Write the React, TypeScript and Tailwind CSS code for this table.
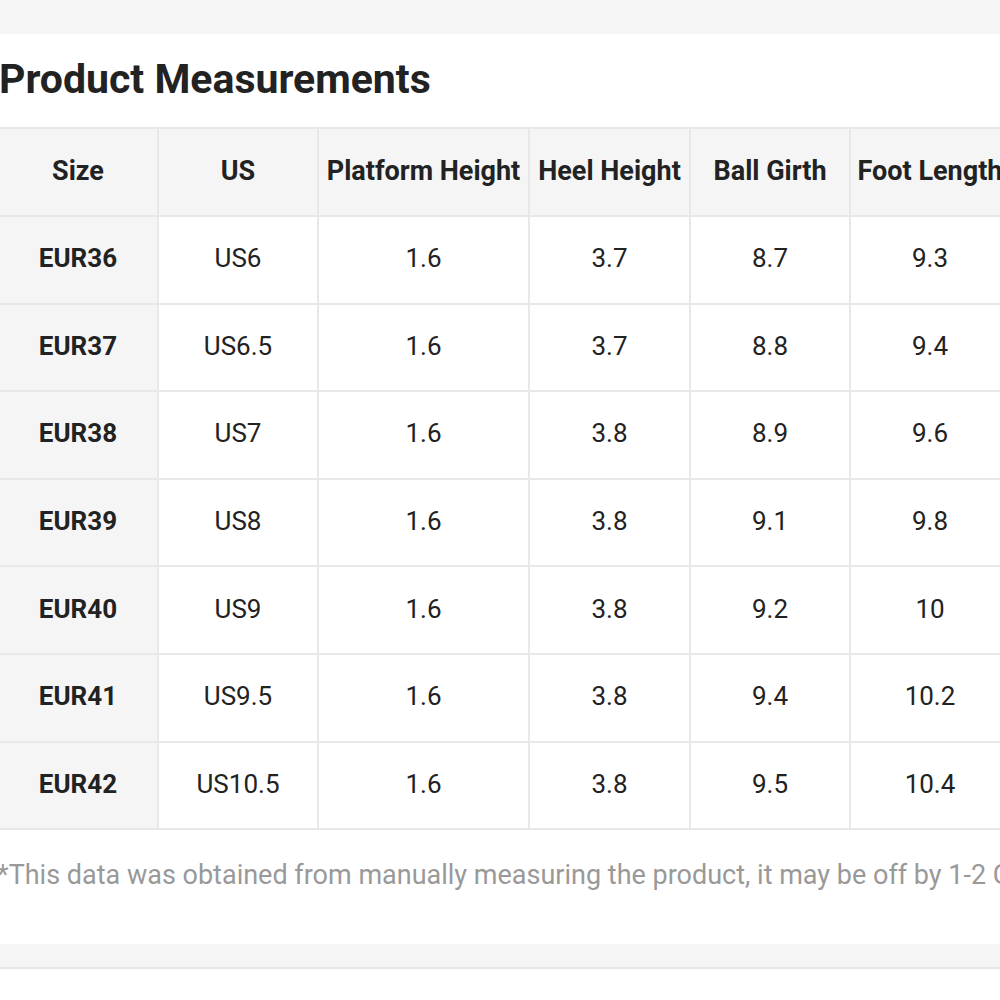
const headers = ['Size', 'US', 'Platform Height', 'Heel Height', 'Ball Girth', 'Foot Length'];
const widths = ['w-[160px]', 'w-[160px]', 'w-[211px]', 'w-[161px]', 'w-[160px]', 'w-[160px]'];

const rows = [
  ['EUR36', 'US6', '1.6', '3.7', '8.7', '9.3'],
  ['EUR37', 'US6.5', '1.6', '3.7', '8.8', '9.4'],
  ['EUR38', 'US7', '1.6', '3.8', '8.9', '9.6'],
  ['EUR39', 'US8', '1.6', '3.8', '9.1', '9.8'],
  ['EUR40', 'US9', '1.6', '3.8', '9.2', '10'],
  ['EUR41', 'US9.5', '1.6', '3.8', '9.4', '10.2'],
  ['EUR42', 'US10.5', '1.6', '3.8', '9.5', '10.4'],
];

export default function App() {
  return (
    <div
      className="w-[1000px] h-[1000px] overflow-hidden bg-[#f5f5f5]"
      style={{ fontFamily: 'Roboto, "Noto Sans", sans-serif' }}
    >
      <div className="h-[34px]" />
      <div className="bg-white h-[910px] -ml-[3px] w-[1100px]">
        <h2 className="text-[41px] leading-[41px] font-bold text-[#222] pt-[25px] pl-[2px] h-[93px]">
          Product Measurements
        </h2>
        <table className="border-collapse table-fixed">
          <thead>
            <tr className="h-[88px] bg-[#f5f5f5]">
              {headers.map((h, i) => (
                <th
                  key={h}
                  className={`${widths[i]} border-2 border-[#e8e8e8] text-[27px] font-bold text-[#222] px-[4px] pb-[2px] whitespace-nowrap text-center`}
                >
                  {h}
                </th>
              ))}
            </tr>
          </thead>
          <tbody>
            {rows.map((r) => (
              <tr key={r[0]} className="h-[87.6px]">
                {r.map((c, i) => (
                  <td
                    key={i}
                    className={
                      i === 0
                        ? 'border-2 border-[#e8e8e8] bg-[#f5f5f5] text-[26px] font-bold text-[#222] text-center pb-[2px]'
                        : 'border-2 border-[#e8e8e8] text-[26px] text-[#222] text-center pb-[2px]'
                    }
                  >
                    {c}
                  </td>
                ))}
              </tr>
            ))}
          </tbody>
        </table>
        <p className="text-[27px] text-[#999] whitespace-nowrap pt-[25px]">
          *This data was obtained from manually measuring the product, it may be off by 1-2 CM.
        </p>
      </div>
      <div className="h-[23px]" />
      <div className="h-[2px] bg-[#e6e6e6]" />
      <div className="bg-white h-[40px]" />
    </div>
  );
}
